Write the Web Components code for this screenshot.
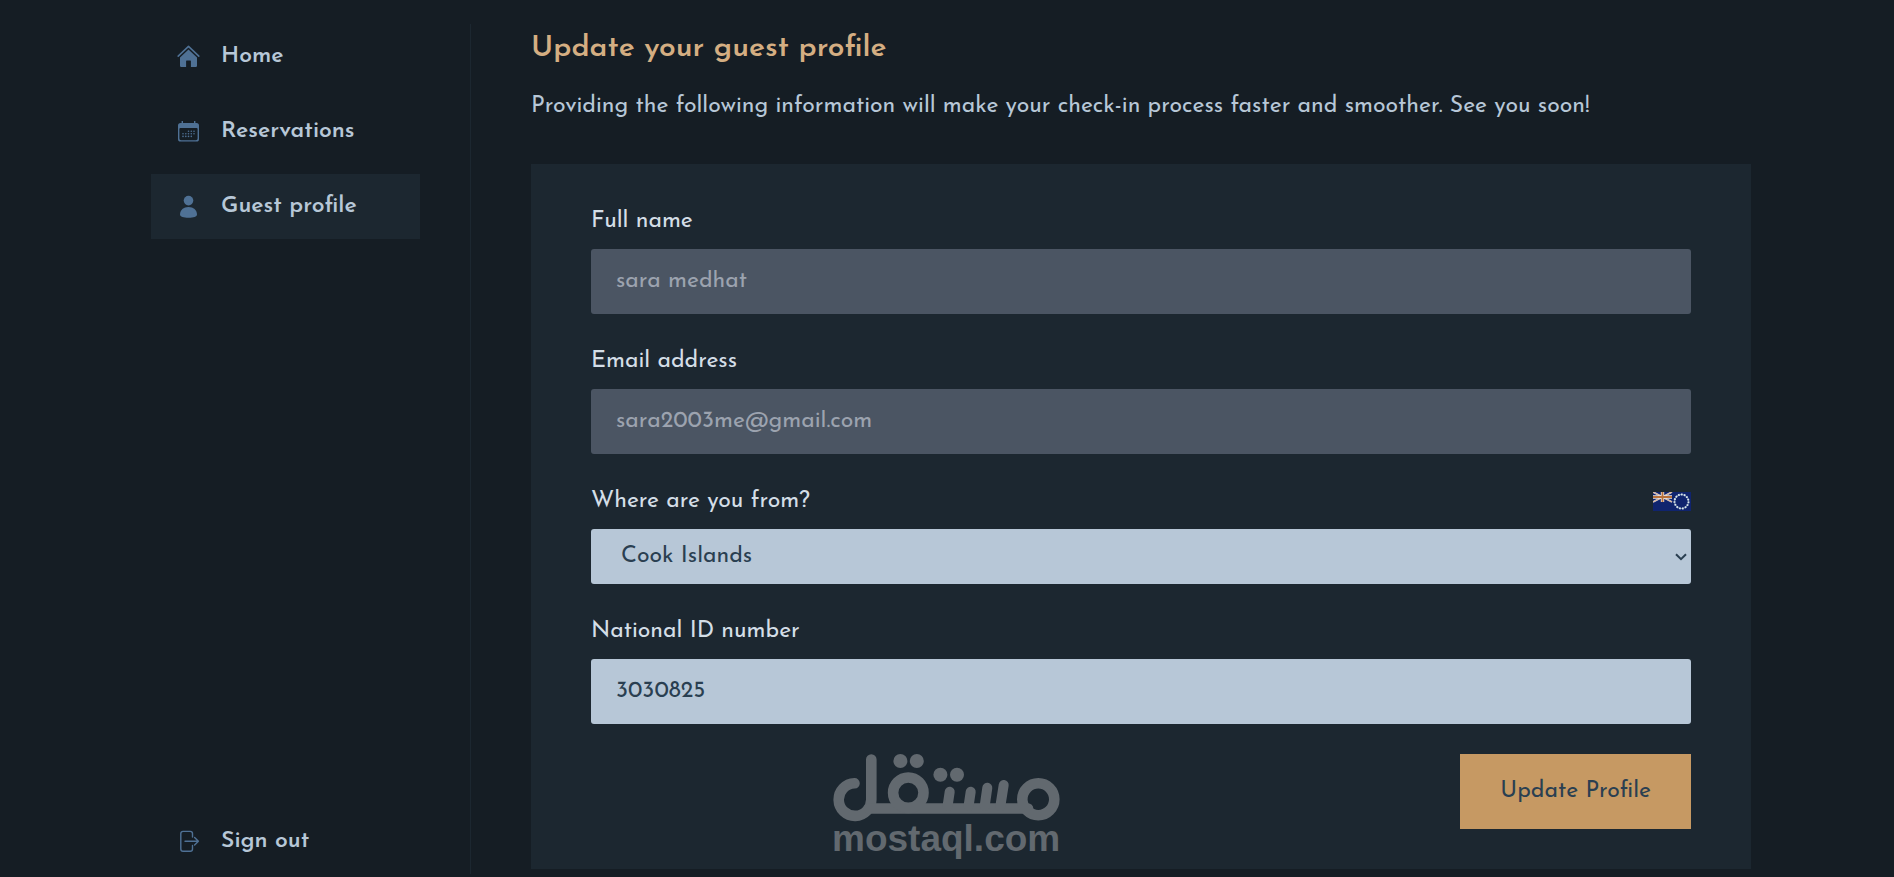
<!DOCTYPE html>
<html lang="en">
<head>
<meta charset="utf-8">
<meta name="viewport" content="width=device-width, initial-scale=1">
<title>Guest profile</title>
<style>
    :root {
        --primary-50: #d4dee7;
        --primary-100: #b7c7d7;
        --primary-600: #4f7195;
        --primary-800: #2a3f51;
        --primary-900: #1c2730;
        --primary-950: #151d24;
        --accent-400: #d4ae82;
        --accent-500: #c69963;
    }

    body {
        margin: 0;
        padding-left: 8px;
        background: var(--primary-950);
        color: var(--primary-100);
        font-family: "Josefin Sans", Lato, sans-serif;
        font-size: 23px;
    }
</style>
</head>
<body>
<account-layout>
    <side-nav slot="nav">
        <nav-link href="#home" icon="home">Home</nav-link>
        <nav-link href="#reservations" icon="calendar">Reservations</nav-link>
        <nav-link href="#profile" icon="user" active>Guest profile</nav-link>
        <nav-link slot="bottom" href="#signout" icon="exit">Sign out</nav-link>
    </side-nav>
    <page-intro>
        <span slot="title">Update your guest profile</span>
        Providing the following information will make your check-in process faster and smoother. See you soon!
    </page-intro>
    <profile-form>
        <text-field label="Full name" value="sara medhat" disabled></text-field>
        <text-field label="Email address" value="sara2003me@gmail.com" disabled></text-field>
        <country-field label="Where are you from?" value="Cook Islands">
            <cook-flag></cook-flag>
        </country-field>
        <text-field label="National ID number" value="3030825"></text-field>
        <submit-button slot="action">Update Profile</submit-button>
    </profile-form>
</account-layout>
<mostaql-mark></mostaql-mark>

<script>
    class BaseElement extends HTMLElement {
        constructor() {
            super();
            this.attachShadow({mode: 'open'});
        }

        connectedCallback() {
            const root = document.createElement('template');
            root.innerHTML = this.template();
            this.shadowRoot.replaceChildren(root.content.cloneNode(true));
        }

        attr(name) {
            return this.getAttribute(name) || '';
        }

        static define(tag) {
            customElements.define(tag, this);
        }
    }

    class AccountLayout extends BaseElement {
        template() {
            return `
                <style>
                    :host {
                        display: grid;
                        grid-template-columns: 320px minmax(0, 1fr);
                        column-gap: 60px;
                        box-sizing: border-box;
                        max-width: 1600px;
                        min-height: 100vh;
                        margin: 0 auto;
                        padding: 24px 0 3px;
                    }
                    main {
                        display: flex;
                        flex-direction: column;
                    }
                </style>
                <slot name="nav"></slot>
                <main><slot></slot></main>
            `;
        }
    }

    class SideNav extends BaseElement {
        template() {
            return `
                <style>
                    :host {
                        display: block;
                        border-right: 1px solid var(--primary-900);
                    }
                    nav {
                        display: flex;
                        flex-direction: column;
                        gap: 10px;
                        box-sizing: border-box;
                        height: 100%;
                        padding-right: 50px;
                    }
                    .bottom {
                        margin-top: auto;
                    }
                </style>
                <nav>
                    <slot></slot>
                    <div class="bottom"><slot name="bottom"></slot></div>
                </nav>
            `;
        }
    }

    class NavLink extends BaseElement {
        #icons = {
            home: `
                <path fill="none" stroke="currentColor" stroke-width="1.6" stroke-linecap="round" stroke-linejoin="round" d="M2.2 12.2 12.5 2.4 22.8 12.2"/>
                <path fill="currentColor" d="M12.5 5.6 4 13.6V21.8Q4 23 5.2 23H10.1V17Q10.1 16.4 10.7 16.4H14.3Q14.9 16.4 14.9 17V23H19.8Q21 23 21 21.8V13.6Z"/>
            `,
            calendar: `
                <path fill="currentColor" d="M5.6 2H7V4H18V2H19.4V4H20.5Q23 4 23 6.5V20Q23 22.6 20.5 22.6H4.5Q2 22.6 2 20V6.5Q2 4 4.5 4H5.6ZM3.4 10V19.6Q3.4 21.2 5 21.2H20Q21.6 21.2 21.6 19.6V10Q21.6 9 20.6 9H4.4Q3.4 9 3.4 10Z"/>
                <g fill="currentColor">
                    <circle cx="12.5" cy="12.2" r=".8"/><circle cx="15.3" cy="12.2" r=".8"/><circle cx="18" cy="12.2" r=".8"/>
                    <circle cx="7" cy="14.8" r=".8"/><circle cx="9.8" cy="14.8" r=".8"/><circle cx="12.5" cy="14.8" r=".8"/><circle cx="15.3" cy="14.8" r=".8"/><circle cx="18" cy="14.8" r=".8"/>
                    <circle cx="7" cy="17.4" r=".8"/><circle cx="9.8" cy="17.4" r=".8"/><circle cx="12.5" cy="17.4" r=".8"/><circle cx="15.3" cy="17.4" r=".8"/>
                </g>
            `,
            user: `
                <circle fill="currentColor" cx="12.5" cy="6.6" r="4.8"/>
                <path fill="currentColor" d="M4 20.5C4 16 7.6 12.9 12.5 12.9S21 16 21 20.5C21 22.6 17.5 23.8 12.5 23.8S4 22.6 4 20.5Z"/>
            `,
            exit: `
                <path fill="none" stroke="currentColor" stroke-width="1.4" stroke-linecap="round" stroke-linejoin="round" d="M16.5 8V4.6Q16.5 2.4 14.3 2.4H7Q4.8 2.4 4.8 4.6V20Q4.8 22.2 7 22.2H14.3Q16.5 22.2 16.5 20V16.4M9 12.3H22.4M18.6 8.5 22.4 12.3 18.6 16.1"/>
            `
        };

        template() {
            return `
                <style>
                    :host {
                        display: block;
                    }
                    a {
                        display: flex;
                        align-items: center;
                        gap: 20px;
                        padding: 15px 25px;
                        line-height: 35px;
                        font-weight: 600;
                        color: inherit;
                        text-decoration: none;
                    }
                    :host([active]) a, a:hover {
                        background: var(--primary-900);
                    }
                    svg {
                        width: 25px;
                        height: 25px;
                        color: var(--primary-600);
                    }
                </style>
                <a href="${this.attr('href')}">
                    <svg viewBox="0 0 25 25" aria-hidden="true">${this.#icons[this.attr('icon')]}</svg>
                    <slot></slot>
                </a>
            `;
        }
    }

    class PageIntro extends BaseElement {
        template() {
            return `
                <style>
                    :host {
                        display: block;
                        margin-bottom: 40px;
                    }
                    h2 {
                        margin: 0 0 15px;
                        color: var(--accent-400);
                        font-size: 30px;
                        font-weight: 600;
                        line-height: 50px;
                    }
                    p {
                        margin: 0;
                        line-height: 35px;
                    }
                </style>
                <h2><slot name="title"></slot></h2>
                <p><slot></slot></p>
            `;
        }
    }

    class ProfileForm extends BaseElement {
        template() {
            return `
                <style>
                    :host {
                        display: block;
                    }
                    form {
                        display: flex;
                        flex-direction: column;
                        gap: 30px;
                        padding: 40px 60px;
                        background: var(--primary-900);
                    }
                    .actions {
                        display: flex;
                        justify-content: flex-end;
                    }
                </style>
                <form>
                    <slot></slot>
                    <div class="actions"><slot name="action"></slot></div>
                </form>
            `;
        }
    }

    // label row and control box shared by the inputs and the select
    const fieldStyles = `
        :host {
            display: flex;
            flex-direction: column;
            gap: 10px;
        }
        label {
            color: var(--primary-50);
            line-height: 35px;
        }
        input, select {
            box-sizing: border-box;
            width: 100%;
            margin: 0;
            border: 0;
            border-radius: 3px;
            background: var(--primary-100);
            color: var(--primary-800);
            font: inherit;
        }
    `;

    class TextField extends BaseElement {
        template() {
            return `
                <style>
                    ${fieldStyles}
                    input {
                        height: 65px;
                        padding: 0 25px;
                    }
                    input:disabled {
                        background: #4b5563;
                        color: #9ca3af;
                        cursor: not-allowed;
                    }
                </style>
                <label for="control">${this.attr('label')}</label>
                <input id="control" type="text" value="${this.attr('value')}" ${this.hasAttribute('disabled') ? 'disabled' : ''}>
            `;
        }
    }

    class CountryField extends BaseElement {
        template() {
            return `
                <style>
                    ${fieldStyles}
                    .head {
                        display: flex;
                        align-items: center;
                        justify-content: space-between;
                    }
                    .select {
                        display: grid;
                        align-items: center;
                    }
                    .select > * {
                        grid-area: 1 / 1;
                    }
                    select {
                        height: 55px;
                        padding: 0 30px;
                        appearance: none;
                    }
                    svg {
                        justify-self: end;
                        margin-right: 4px;
                        pointer-events: none;
                    }
                </style>
                <div class="head">
                    <label for="control">${this.attr('label')}</label>
                    <slot></slot>
                </div>
                <div class="select">
                    <select id="control">
                        <option selected>${this.attr('value')}</option>
                    </select>
                    <svg width="12" height="8" viewBox="0 0 12 8" aria-hidden="true">
                        <path fill="none" stroke="#2a3f51" stroke-width="2" d="M1 1.2 6 6.2 11 1.2"/>
                    </svg>
                </div>
            `;
        }
    }

    class CookFlag extends BaseElement {
        template() {
            return `
                <style>
                    :host {
                        display: block;
                        width: 38px;
                        height: 19px;
                    }
                    svg {
                        display: block;
                    }
                </style>
                <svg width="38" height="19" viewBox="0 0 38 19" role="img" aria-label="Flag of the Cook Islands">
                    <rect width="38" height="19" fill="#10246e"/>
                    <path stroke="#e4e2e8" stroke-width="1.8" d="M0 0 19 10M19 0 0 10"/>
                    <path stroke="#c9864f" stroke-width=".6" d="M0 0 19 10M19 0 0 10"/>
                    <path stroke="#ece6e2" stroke-width="3.4" d="M9.5 0V10M0 5H19"/>
                    <path stroke="#b8713a" stroke-width="1.8" d="M9.5 0V10M0 5H19"/>
                    <circle cx="28.5" cy="9.5" r="7" fill="none" stroke="#86a0bd" stroke-width="1"/>
                    <circle cx="28.5" cy="9.5" r="7" fill="none" stroke="#dbe6ea" stroke-width="2" stroke-dasharray="1.6 1.33"/>
                </svg>
            `;
        }
    }

    class SubmitButton extends BaseElement {
        template() {
            return `
                <style>
                    :host {
                        display: block;
                    }
                    button {
                        padding: 20px 40px;
                        border: 0;
                        background: var(--accent-500);
                        color: var(--primary-800);
                        font: inherit;
                        line-height: 35px;
                        cursor: pointer;
                    }
                </style>
                <button type="submit"><slot></slot></button>
            `;
        }
    }

    class MostaqlMark extends BaseElement {
        template() {
            return `
                <style>
                    :host {
                        position: absolute;
                        top: 754px;
                        left: 50%;
                        transform: translateX(-50%);
                        pointer-events: none;
                    }
                    svg {
                        display: block;
                        font: bold 37px "Liberation Sans", Arial, sans-serif;
                    }
                </style>
                <svg width="228" height="106" viewBox="0 0 228 106" role="img" aria-label="mostaql.com">
                    <g fill="none" stroke="#62696f" stroke-width="10.6" stroke-linecap="round">
                        <path d="M38.3 5.5V45.3A16.3 16.3 0 1 1 21.5 29.3"/>
                        <path d="M36 54.5H195"/>
                        <circle cx="75.3" cy="38.7" r="15.2"/>
                        <circle cx="205.3" cy="45.3" r="16"/>
                        <path stroke-width="10" d="M116.7 37.8 114.6 52M137.7 37.8 135.6 52M154.3 33.8 151.7 52M170.7 31 167.4 52"/>
                    </g>
                    <g fill="#62696f">
                        <circle cx="67.4" cy="7" r="7"/>
                        <circle cx="83.8" cy="7" r="7"/>
                        <circle cx="107.4" cy="20.7" r="7"/>
                        <circle cx="124" cy="20.7" r="7"/>
                        <text x="-1" y="97">mostaql.com</text>
                    </g>
                </svg>
            `;
        }
    }

    AccountLayout.define('account-layout');
    SideNav.define('side-nav');
    NavLink.define('nav-link');
    PageIntro.define('page-intro');
    ProfileForm.define('profile-form');
    TextField.define('text-field');
    CountryField.define('country-field');
    CookFlag.define('cook-flag');
    SubmitButton.define('submit-button');
    MostaqlMark.define('mostaql-mark');
</script>
</body>
</html>
